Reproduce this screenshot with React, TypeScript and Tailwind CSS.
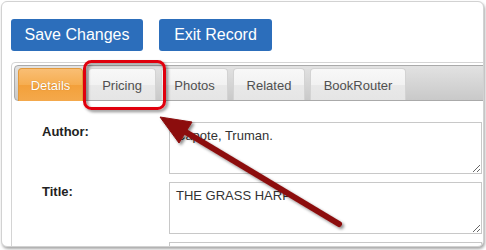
import React from "react";

const tabs = [
  { label: "Details", w: "w-[65px]", active: true },
  { label: "Pricing", w: "w-[68px]", active: false },
  { label: "Photos", w: "w-[67px]", active: false },
  { label: "Related", w: "w-[72px]", active: false },
  { label: "BookRouter", w: "w-[96px]", active: false },
];

const fields = [
  { label: "Author:", value: "Capote, Truman." },
  { label: "Title:", value: "THE GRASS HARP" },
  { label: "Subtitle:", value: "" },
];

export default function App() {
  return (
    <div className="relative h-[250px] w-[486px] overflow-hidden bg-white font-['Liberation_Sans',Arial,sans-serif]">
      <div className="ml-[1px] mt-[1px] h-[246px] w-[483px] overflow-hidden rounded-[6px] border border-[#d2d2d2] bg-white pl-[9px] pt-[17px] shadow-[1px_2px_3px_rgba(0,0,0,0.35)]">
        <div className="flex gap-[16px]">
          <button className="h-[32px] w-[132px] rounded-[3px] bg-[#2c6ebb] text-[16px] text-white">
            Save Changes
          </button>
          <button className="h-[32px] w-[113px] rounded-[3px] bg-[#2c6ebb] text-[16px] text-white">
            Exit Record
          </button>
        </div>

        <div className="mt-[11px] w-[490px] rounded-[4px] border border-[#d4d4d4] p-[2px]">
          <div className="flex h-[36px] items-start gap-[5px] rounded-[4px] border border-[#aaaaaa] bg-[linear-gradient(#e2e2e2,#c9c9c9)] pl-[3px] pt-[2px]">
            {tabs.map((t) =>
              t.active ? (
                <div
                  key={t.label}
                  className={`${t.w} flex h-[33px] items-center justify-center rounded-t-[4px] border border-b-0 border-[#e39a3c] bg-[linear-gradient(#f9be74_0%,#f6ad50_50%,#f3a03a_50%,#f4a94c_100%)] pt-[2px] text-[13px] text-white [text-shadow:0_0_1px_rgba(160,90,0,0.6)]`}
                >
                  {t.label}
                </div>
              ) : (
                <div
                  key={t.label}
                  className={`${t.w} flex h-[32px] items-center justify-center rounded-t-[4px] border border-b-0 border-[#d3d3d3] bg-[linear-gradient(#f8f8f8_0%,#f2f2f2_50%,#e9e9e9_50%,#e5e5e5_100%)] pt-[2px] text-[13px] text-[#505050]`}
                >
                  {t.label}
                </div>
              )
            )}
          </div>

          <div className="pl-[28px] pt-[21px]">
            {fields.map((f) => (
              <div key={f.label} className="mb-[8px] flex">
                <div className="mt-[2px] w-[127px] text-[13px] font-bold leading-[16px] text-[#222]">
                  {f.label}
                </div>
                <textarea
                  readOnly
                  value={f.value}
                  className="h-[52px] w-[313px] border border-[#c8c8c8] px-[6px] pt-[5px] text-[13px] leading-[15px] text-[#333] outline-none"
                />
              </div>
            ))}
          </div>
        </div>
      </div>

      <svg className="pointer-events-none absolute inset-0" width="486" height="250" viewBox="0 0 486 250">
        <defs>
          <filter id="sh" x="-20%" y="-20%" width="140%" height="140%">
            <feDropShadow dx="2" dy="2" stdDeviation="1.5" floodColor="#000" floodOpacity="0.45" />
          </filter>
        </defs>
        <rect x="84.5" y="61.5" width="80" height="47" rx="7" fill="none" stroke="#e0000f" strokeWidth="3" filter="url(#sh)" />
        <g filter="url(#sh)" fill="#8c1111" stroke="#8c1111">
          <line x1="339" y1="224" x2="184" y2="131" strokeWidth="6" strokeLinecap="round" />
          <polygon points="160,117 192,122 179,143" strokeWidth="1" strokeLinejoin="round" />
        </g>
      </svg>
    </div>
  );
}
